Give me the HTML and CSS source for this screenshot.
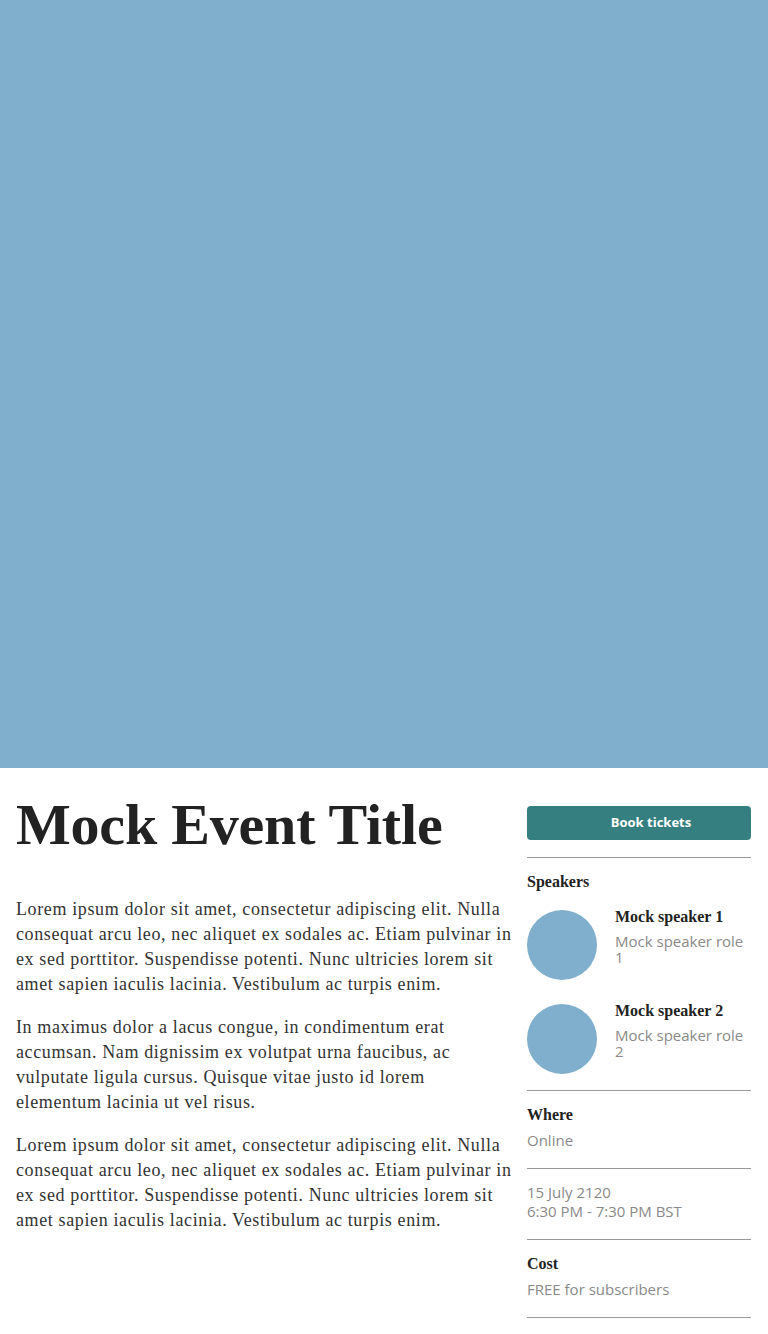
FILE: index.html
```html
<!DOCTYPE html>
<html lang="en">
<head>
<meta charset="utf-8">
<title>Mock Event Title</title>
<link rel="stylesheet" href="styles.css">
</head>
<body>
<div class="hero"></div>
<main class="content">
  <article class="main-col">
    <h1 class="title">Mock Event Title</h1>
    <p class="para">Lorem ipsum dolor sit amet, consectetur adipiscing elit. Nulla consequat arcu leo, nec aliquet ex sodales ac. Etiam pulvinar in ex sed porttitor. Suspendisse potenti. Nunc ultricies lorem sit amet sapien iaculis lacinia. Vestibulum ac turpis enim.</p>
    <p class="para">In maximus dolor a lacus congue, in condimentum erat accumsan. Nam dignissim ex volutpat urna faucibus, ac vulputate ligula cursus. Quisque vitae justo id lorem elementum lacinia ut vel risus.</p>
    <p class="para">Lorem ipsum dolor sit amet, consectetur adipiscing elit. Nulla consequat arcu leo, nec aliquet ex sodales ac. Etiam pulvinar in ex sed porttitor. Suspendisse potenti. Nunc ultricies lorem sit amet sapien iaculis lacinia. Vestibulum ac turpis enim.</p>
  </article>
  <aside class="side">
    <button class="book">Book tickets</button>
    <section class="block speakers">
      <h2 class="label">Speakers</h2>
      <ul class="speaker-list">
        <li class="speaker">
          <div class="avatar"></div>
          <div class="speaker-info">
            <div class="speaker-name">Mock speaker 1</div>
            <div class="speaker-role">Mock speaker role 1</div>
          </div>
        </li>
        <li class="speaker">
          <div class="avatar"></div>
          <div class="speaker-info">
            <div class="speaker-name">Mock speaker 2</div>
            <div class="speaker-role">Mock speaker role 2</div>
          </div>
        </li>
      </ul>
    </section>
    <section class="block">
      <h2 class="label">Where</h2>
      <div class="value">Online</div>
    </section>
    <section class="block">
      <div class="value">15 July 2120<br>6:30 PM - 7:30 PM BST</div>
    </section>
    <section class="block last">
      <h2 class="label">Cost</h2>
      <div class="value">FREE for subscribers</div>
    </section>
  </aside>
</main>
</body>
</html>
```

FILE: styles.css
```css
html, body {
  margin: 0;
  padding: 0;
  background: #ffffff;
}

body {
  font-family: "Liberation Serif", "Times New Roman", serif;
  color: #333333;
}

.hero {
  height: 768px;
  background: #80afce;
}

.content {
  display: flex;
  gap: 15px;
  padding: 25px 17px 0 16px;
}

.main-col {
  flex: 1;
  min-width: 0;
}

.title {
  margin: 0 0 40px;
  font-family: "Liberation Serif", "Times New Roman", serif;
  font-weight: 700;
  font-size: 58px;
  line-height: 64px;
  letter-spacing: -0.2px;
  color: #222222;
}

.para {
  margin: 0 0 18px;
  font-size: 18px;
  line-height: 25px;
  letter-spacing: 0.62px;
  color: #333333;
}

.side {
  width: 224px;
  flex: none;
  padding-top: 13px;
}

.book {
  display: block;
  width: 100%;
  height: 34px;
  margin: 0 0 17px;
  border: 0;
  border-radius: 4px;
  background: #357f80;
  color: #ffffff;
  font-family: "Open Sans", sans-serif;
  font-weight: 700;
  font-size: 13px;
  padding: 0 0 3px 24px;
}

.block {
  border-top: 1px solid #999999;
  padding: 14px 0 18px;
}

.block.last {
  border-bottom: 1px solid #999999;
}

.speakers {
  padding-bottom: 16px;
}

.label {
  margin: 0 0 6px;
  font-family: "Liberation Serif", "Times New Roman", serif;
  font-weight: 700;
  font-size: 16px;
  line-height: 20px;
  color: #222222;
}

.speakers .label {
  margin-bottom: 18px;
}

.value {
  font-family: "Open Sans", sans-serif;
  font-size: 15px;
  line-height: 19px;
  color: #8a8a8a;
}

.speaker-list {
  list-style: none;
  margin: 0;
  padding: 0;
  display: flex;
  flex-direction: column;
  gap: 24px;
}

.speaker {
  display: flex;
  gap: 18px;
  align-items: flex-start;
}

.avatar {
  width: 70px;
  height: 70px;
  border-radius: 50%;
  background: #80afce;
  flex: none;
}

.speaker-info {
  margin-top: -3px;
  min-width: 0;
}

.speaker-name {
  font-weight: 700;
  font-size: 16px;
  line-height: 20px;
  color: #222222;
  margin-bottom: 6px;
}

.speaker-role {
  font-family: "Open Sans", sans-serif;
  font-size: 15px;
  line-height: 16px;
  color: #8a8a8a;
}
```
